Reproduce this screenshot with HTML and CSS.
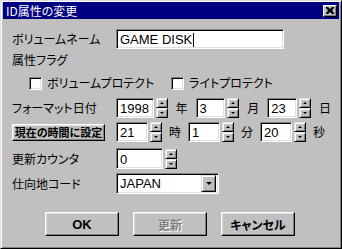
FILE: index.html
```html
<!DOCTYPE html>
<html lang="ja">
<head>
    <meta charset="UTF-8">
    <title>ID属性の変更</title>
    <link rel="stylesheet" href="styles.css">
</head>
<body>
    <div class="window">
        <div class="titlebar">
            <span class="title">ID属性の変更</span>
            <span class="close">
                <svg width="8" height="7" viewBox="0 0 8 7"><path d="M0 0h2l2 2 2-2h2v1L6 3.5 8 6v1H6L4 5 2 7H0V6l2-2.5L0 1z" fill="#000"/></svg>
            </span>
        </div>
        <div class="content">
            <div class="row r-name">
                <span class="label">ボリュームネーム</span>
                <div class="field w-name">GAME DISK<span class="caret"></span></div>
            </div>
            <div class="row r-flag"><span class="label">属性フラグ</span></div>
            <div class="row r-check">
                <span class="check c1"><span class="box"></span>ボリュームプロテクト</span>
                <span class="check"><span class="box"></span>ライトプロテクト</span>
            </div>
            <div class="row r-date">
                <span class="label">フォーマット日付</span>
                <div class="field w-year">1998</div>
                <div class="spin"><span class="sb up"></span><span class="sb down"></span></div>
                <span class="unit">年</span>
                <div class="field w-small">3</div>
                <div class="spin"><span class="sb up"></span><span class="sb down"></span></div>
                <span class="unit">月</span>
                <div class="field w-small">23</div>
                <div class="spin"><span class="sb up"></span><span class="sb down"></span></div>
                <span class="unit">日</span>
            </div>
            <div class="row r-time">
                <span class="label"><span class="btn btn-now">現在の時間に設定</span></span>
                <div class="field w-time">21</div>
                <div class="spin"><span class="sb up"></span><span class="sb down"></span></div>
                <span class="unit u-time">時</span>
                <div class="field w-time">1</div>
                <div class="spin"><span class="sb up"></span><span class="sb down"></span></div>
                <span class="unit u-time">分</span>
                <div class="field w-time">20</div>
                <div class="spin"><span class="sb up"></span><span class="sb down"></span></div>
                <span class="unit u-time">秒</span>
            </div>
            <div class="row r-count">
                <span class="label">更新カウンタ</span>
                <div class="field w-count">0</div>
                <div class="spin"><span class="sb up"></span><span class="sb down"></span></div>
            </div>
            <div class="row r-dest">
                <span class="label">仕向地コード</span>
                <div class="field select">
                    <span>JAPAN</span>
                    <span class="drop"></span>
                </div>
            </div>
            <div class="buttons">
                <span class="btn btn-main">OK</span>
                <span class="btn btn-main disabled">更新</span>
                <span class="btn btn-main">キャンセル</span>
            </div>
        </div>
    </div>
</body>
</html>
```

FILE: styles.css
```css
body {
    margin: 0;
    background: #c0c0c0;
    font-family: "Noto Sans CJK JP", sans-serif;
    font-size: 12px;
    font-feature-settings: "palt";
    color: #000;
}
.window {
    width: 342px;
    height: 249px;
    box-sizing: border-box;
    background: #c0c0c0;
    border: 1px solid;
    border-color: #dfdfdf #000 #000 #dfdfdf;
    box-shadow: inset 1px 1px #fff, inset -1px -1px #808080;
    padding: 1px 2px 2px 2px;
}
.titlebar {
    height: 17px;
    background: #000080;
    color: #fff;
    display: flex;
    align-items: center;
    justify-content: space-between;
    padding: 0 2px 0 3px;
}
.title {
    line-height: 16px;
}
.close {
    width: 14px;
    height: 12px;
    box-sizing: border-box;
    background: #c0c0c0;
    border: 1px solid;
    border-color: #fff #000 #000 #fff;
    box-shadow: inset -1px -1px #808080;
    display: flex;
    align-items: center;
    justify-content: center;
}
.content {
    padding: 10px 0 0 9px;
}
.row {
    display: flex;
    align-items: center;
    height: 20px;
}
.label {
    width: 104px;
    flex: none;
    line-height: 16px;
}
.r-flag {
    margin-top: 3px;
    height: 16px;
}
.r-check {
    margin-top: 7px;
    height: 16px;
}
.r-date {
    margin-top: 7px;
}
.r-time {
    margin-top: 4px;
}
.r-count {
    margin-top: 6px;
    height: 21px;
}
.r-dest {
    margin-top: 4px;
    height: 21px;
}

.field {
    box-sizing: border-box;
    height: 20px;
    background: #fff;
    border: 1px solid;
    border-color: #808080 #fff #fff #808080;
    box-shadow: inset 1px 1px #000, inset -1px -1px #dfdfdf;
    padding: 1px 0 0 3px;
    font-family: "Liberation Sans", Arial, sans-serif;
    font-size: 13px;
    line-height: 17px;
    display: flex;
    align-items: center;
}
.w-name { width: 168px; }
.w-year { width: 38px; }
.w-small { width: 30px; }
.w-time { width: 32px; }
.w-count { width: 47px; height: 21px; }
.caret {
    display: inline-block;
    width: 1px;
    height: 14px;
    background: #000;
    margin-left: 1px;
}

.check {
    display: flex;
    align-items: center;
    line-height: 16px;
}
.c1 {
    margin-left: 17px;
    width: 142px;
}
.box {
    width: 13px;
    height: 13px;
    box-sizing: border-box;
    background: #fff;
    border: 1px solid;
    border-color: #808080 #fff #fff #808080;
    box-shadow: inset 1px 1px #000, inset -1px -1px #dfdfdf;
    margin-right: 5px;
}

.spin {
    display: flex;
    flex-direction: column;
    margin-left: 2px;
}
.sb {
    width: 12px;
    height: 10px;
    box-sizing: border-box;
    background: #c0c0c0;
    border: 1px solid;
    border-color: #dfdfdf #000 #000 #dfdfdf;
    box-shadow: inset 1px 1px #fff, inset -1px -1px #808080;
    display: flex;
    align-items: center;
    justify-content: center;
}
.sb::after {
    content: "";
    width: 0;
    height: 0;
    border-left: 2px solid transparent;
    border-right: 2px solid transparent;
}
.up::after {
    border-bottom: 2px solid #000;
}
.down::after {
    border-top: 2px solid #000;
}
.unit {
    margin: 0 8px;
    line-height: 16px;
}
.u-time {
    margin: 0 7px;
}

.btn {
    box-sizing: border-box;
    background: #c0c0c0;
    border: 1px solid;
    border-color: #fff #000 #000 #fff;
    box-shadow: inset -1px -1px #808080, inset 1px 1px #dfdfdf;
    display: flex;
    align-items: center;
    justify-content: center;
    font-weight: bold;
}
.btn-now {
    width: 93px;
    height: 17px;
    font-size: 11px;
    line-height: 14px;
}

.select {
    width: 103px;
    height: 21px;
    justify-content: space-between;
    padding: 2px 2px 2px 3px;
}
.drop {
    width: 15px;
    height: 17px;
    box-sizing: border-box;
    background: #c0c0c0;
    border: 1px solid;
    border-color: #dfdfdf #000 #000 #dfdfdf;
    box-shadow: inset 1px 1px #fff, inset -1px -1px #808080;
    display: flex;
    align-items: center;
    justify-content: center;
}
.drop::after {
    content: "";
    border-left: 3px solid transparent;
    border-right: 3px solid transparent;
    border-top: 3px solid #000;
}

.buttons {
    display: flex;
    gap: 14px;
    margin: 18px 0 0 33px;
}
.btn-main {
    width: 74px;
    height: 24px;
    font-size: 12px;
}
.btn-main:first-child {
    font-family: "Liberation Sans", Arial, sans-serif;
    font-size: 13px;
}
.disabled {
    color: #808080;
    text-shadow: 1px 1px #fff;
}
```
